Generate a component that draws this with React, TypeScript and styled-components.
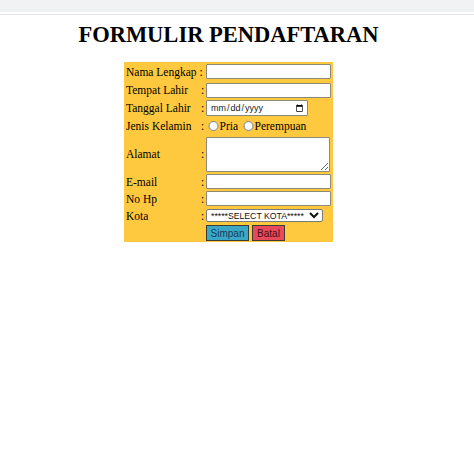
import { Fragment } from 'react';
import styled, { createGlobalStyle } from 'styled-components';

const GlobalStyle = createGlobalStyle`
  html, body {
    margin: 0;
    padding: 0;
    background: #ffffff;
  }
  body {
    font-family: 'Liberation Serif', 'Times New Roman', serif;
    color: #000;
  }
`;

const TopBar = styled.div`
  height: 12px;
  background-color: #f1f2f4;
  border-bottom: 2px solid #ffffff;
  box-shadow: 0 1px 0 #e4e4e6;
`;

const Page = styled.div`
  width: 457px;
  display: flex;
  flex-direction: column;
  align-items: center;
`;

const Title = styled.h1`
  margin: 8px 0 0;
  height: 40px;
  font-size: 22.5px;
  line-height: 26px;
  font-weight: 700;
  font-family: 'Liberation Serif', 'Times New Roman', serif;
`;

const Form = styled.form`
  display: grid;
  grid-template-columns: 76px 6px 127px;
  grid-template-rows: 19px 18px 18px 18px 38px 17px 17px 17px 18px;
  background-color: #fec83f;
  font-size: 11.5px;
`;

const Label = styled.div`
  display: flex;
  align-items: center;
  padding-left: 2px;
  white-space: nowrap;
`;

const Colon = styled.div`
  display: flex;
  align-items: center;
  padding-left: 1px;
`;

const Field = styled.div<{ $gap?: number }>`
  display: flex;
  align-items: center;
  gap: ${(p) => p.$gap ?? 0}px;
`;

const TextInput = styled.input`
  box-sizing: border-box;
  width: 125px;
  height: 15px;
  margin: 0;
  padding: 0 2px;
  border: 1px solid #8e8878;
  border-radius: 1px;
  background: #fff;
  font-size: 9.5px;
  font-family: 'Liberation Sans', Arial, sans-serif;
`;

const DateInput = styled(TextInput)`
  width: 102px;
  height: 16px;
  padding: 0 3px;
  font-size: 9px;
  color: #222;
  &::-webkit-calendar-picker-indicator {
    width: 9px;
    height: 9px;
    margin: 0;
    padding: 0;
  }
`;

const TextArea = styled.textarea`
  box-sizing: border-box;
  width: 124px;
  height: 35px;
  margin: 0;
  padding: 2px;
  border: 1px solid #8e8878;
  border-radius: 1px;
  background: #fff;
  font-size: 9.5px;
`;

const RadioLabel = styled.label`
  display: flex;
  align-items: center;
  gap: 1px;
`;

const Radio = styled.input`
  width: 10.5px;
  height: 10.5px;
  margin: 0 0 0 2px;
`;

const Select = styled.select`
  box-sizing: border-box;
  width: 117px;
  height: 13px;
  margin: 0;
  padding: 0;
  border: 1px solid #7a7a7a;
  border-radius: 2px;
  background: #fff;
  font-size: 8.7px;
  line-height: 11px;
  font-family: 'Liberation Sans', Arial, sans-serif;
  color: #111;
`;

const Button = styled.button<{ $bg: string; $fg: string; $w: number }>`
  box-sizing: border-box;
  width: ${(p) => p.$w}px;
  height: 16px;
  margin: 0;
  padding: 0;
  border: 1.5px solid #3b3b33;
  background-color: ${(p) => p.$bg};
  color: ${(p) => p.$fg};
  font-size: 10px;
  font-family: 'Liberation Sans', Arial, sans-serif;
`;

const rows: { label: string; colon: boolean; kind: string }[] = [
  { label: 'Nama Lengkap :', colon: false, kind: 'text' },
  { label: 'Tempat Lahir', colon: true, kind: 'text' },
  { label: 'Tanggal Lahir', colon: true, kind: 'date' },
  { label: 'Jenis Kelamin', colon: true, kind: 'radio' },
  { label: 'Alamat', colon: true, kind: 'textarea' },
  { label: 'E-mail', colon: true, kind: 'text' },
  { label: 'No Hp', colon: true, kind: 'text' },
  { label: 'Kota', colon: true, kind: 'select' },
];

const renderField = (kind: string) => {
  switch (kind) {
    case 'date':
      return <DateInput type="date" />;
    case 'radio':
      return (
        <Field $gap={3}>
          <RadioLabel>
            <Radio type="radio" name="jk" />
            Pria
          </RadioLabel>
          <RadioLabel>
            <Radio type="radio" name="jk" />
            Perempuan
          </RadioLabel>
        </Field>
      );
    case 'textarea':
      return <TextArea />;
    case 'select':
      return (
        <Select defaultValue="">
          <option value="">*****SELECT KOTA*****</option>
          <option>Jakarta</option>
          <option>Bandung</option>
          <option>Surabaya</option>
        </Select>
      );
    default:
      return <TextInput type="text" />;
  }
};

export default function App() {
  return (
    <>
      <GlobalStyle />
      <TopBar />
      <Page>
        <Title>FORMULIR PENDAFTARAN</Title>
        <Form onSubmit={(e) => e.preventDefault()}>
          {rows.map((r) => (
            <Fragment key={r.label}>
              <Label>{r.label}</Label>
              <Colon>{r.colon ? ':' : ''}</Colon>
              <Field>{renderField(r.kind)}</Field>
            </Fragment>
          ))}
          <Label />
          <Colon />
          <Field $gap={3}>
            <Button type="submit" $bg="#3ba7c6" $fg="#163c58" $w={43}>
              Simpan
            </Button>
            <Button type="reset" $bg="#e84a5b" $fg="#4a1016" $w={33}>
              Batal
            </Button>
          </Field>
        </Form>
      </Page>
    </>
  );
}
